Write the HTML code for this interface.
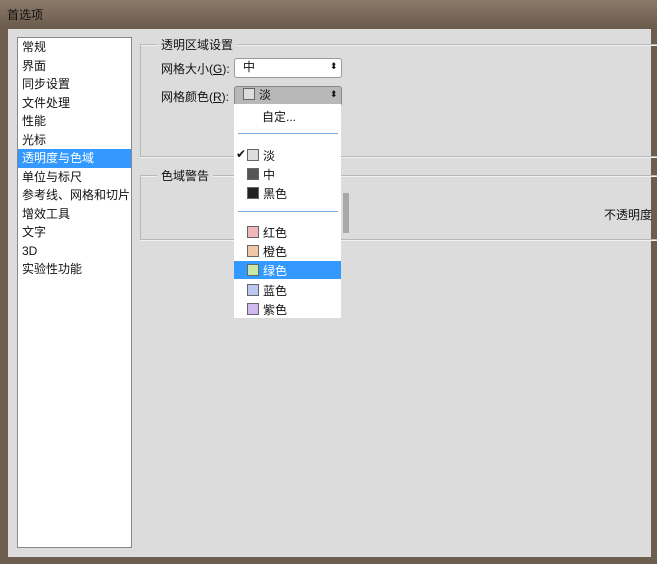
<!DOCTYPE html><html><head><meta charset="utf-8"><style>
body{margin:0;width:657px;height:564px;overflow:hidden;background:#6e5e50;font-family:"Liberation Sans","Noto Sans CJK SC",sans-serif;font-size:12px;color:#111;position:relative}
.t{position:absolute;left:0;top:0;width:657px;height:29px;background:linear-gradient(#8b7a6a,#6a5a4c);}
.t span{position:absolute;left:7px;top:6px;color:#111}
.main{position:absolute;left:8px;top:29px;width:643px;height:528px;background:#dcdcdc}
.list{position:absolute;left:17px;top:37px;width:113px;height:509px;background:#fff;border:1px solid #888}
.list div{height:18.5px;line-height:18.5px;padding-left:4px}
.list .s{background:#3399ff;color:#fff}
.a{position:absolute}
.ln{position:absolute;height:1px;background:#b8b8b8;border-bottom:1px solid #f2f2f2}
.sel{position:absolute;left:234px;width:106px;height:18px;border:1px solid #999;border-radius:3px;background:#fff;line-height:17px}
.sw{display:inline-block;width:10px;height:10px;border:1px solid #666;vertical-align:-1px;margin-right:4px}
.dd{position:absolute;left:234px;top:104px;width:107px;height:214px;background:#fff}
.dd .i{position:absolute;left:13px}
.dd .h{position:absolute;left:4px;width:100px;height:1px;background:#7aaee0}
</style></head><body>
<div class="t"><span>首选项</span></div>
<div class="main"></div>
<div class="list"><div>常规</div><div>界面</div><div>同步设置</div><div>文件处理</div><div>性能</div><div>光标</div><div class="s">透明度与色域</div><div>单位与标尺</div><div>参考线、网格和切片</div><div>增效工具</div><div>文字</div><div>3D</div><div>实验性功能</div></div>
<div class="ln" style="left:140px;top:44px;width:517px"></div>
<div class="ln" style="left:140px;top:44px;width:1px;height:113px"></div>
<div class="ln" style="left:140px;top:156px;width:517px"></div>
<div class="a" style="left:157px;top:36px;background:#dcdcdc;padding:0 4px">透明区域设置</div>
<div class="a" style="left:161px;top:60px">网格大小(<u>G</u>):</div>
<div class="sel" style="top:58px"><span style="margin-left:8px">中</span></div>
<div class="a" style="left:161px;top:88px">网格颜色(<u>R</u>):</div>
<div class="sel" style="top:86px;background:#b8b8b8;border-color:#888"><span style="margin-left:8px"><span class="sw" style="background:#ddd"></span>淡</span></div>
<div class="a" style="left:330px;top:62px;font-size:9px;line-height:9px">⬍</div>
<div class="a" style="left:330px;top:90px;font-size:9px;line-height:9px">⬍</div>
<div class="ln" style="left:140px;top:175px;width:517px"></div>
<div class="ln" style="left:140px;top:175px;width:1px;height:65px"></div>
<div class="ln" style="left:140px;top:239px;width:517px"></div>
<div class="a" style="left:157px;top:167px;background:#dcdcdc;padding:0 4px">色域警告</div>
<div class="a" style="left:604px;top:206px">不透明度</div>
<div class="a" style="left:343px;top:193px;width:6px;height:40px;background:#a8a8a8"></div>
<div class="dd">
<div class="i" style="left:28px;top:4px">自定...</div>
<div class="h" style="top:29px"></div>
<div class="a" style="left:2px;top:43px">✔</div>
<div class="i" style="top:43px"><span class="sw" style="background:#ddd"></span>淡</div>
<div class="i" style="top:62px"><span class="sw" style="background:#555"></span>中</div>
<div class="i" style="top:81px"><span class="sw" style="background:#222"></span>黑色</div>
<div class="h" style="top:107px"></div>
<div class="i" style="top:120px"><span class="sw" style="background:#f0b8b8"></span>红色</div>
<div class="i" style="top:139px"><span class="sw" style="background:#f0c8a8"></span>橙色</div>
<div class="a" style="left:0;top:157px;width:107px;height:18px;background:#3399ff"></div>
<div class="i" style="top:158px;color:#fff"><span class="sw" style="background:#c8e8a8"></span>绿色</div>
<div class="i" style="top:178px"><span class="sw" style="background:#b8c8f0"></span>蓝色</div>
<div class="i" style="top:197px"><span class="sw" style="background:#d0b8f0"></span>紫色</div>
</div>
</body></html>
